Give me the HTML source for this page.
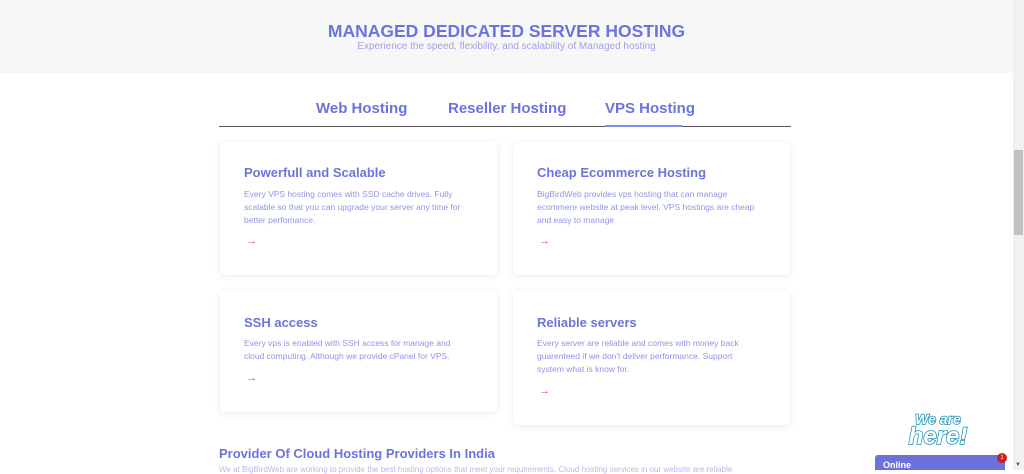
<!DOCTYPE html>
<html><head><style>
*{margin:0;padding:0;box-sizing:border-box}
body{width:1024px;height:470px;overflow:hidden;background:#fff;font-family:"Liberation Sans",sans-serif;position:relative}
.hdr{position:absolute;left:0;top:0;width:1013px;height:73px;background:#f7f7f7;text-align:center}
.hdr h1{position:absolute;top:21px;width:100%;font-size:17.5px;font-weight:bold;color:#6a74dd;letter-spacing:0}
.hdr p{position:absolute;top:41px;width:100%;font-size:10px;color:#9ea3e6}
.tab{position:absolute;top:100px;font-size:15px;font-weight:bold;color:#6a74dd}
.line{position:absolute;left:219px;top:126px;width:572px;height:1px;background:#555}
.act{position:absolute;left:605px;top:125px;width:77px;height:2px;background:#7f8af0}
.card{position:absolute;background:#fff;border-radius:5px;box-shadow:0 1px 8px rgba(0,0,0,0.09)}
.card h3{position:absolute;left:24px;font-size:13px;font-weight:bold;color:#6a74dd}
.card p{position:absolute;left:24px;width:218px;font-size:8.5px;line-height:13px;color:#8f95e4}
.card span{position:absolute;left:26px;font-size:11px;font-weight:bold;color:#f04a4a}
.sb{position:absolute;left:1013px;top:0;width:11px;height:470px;background:#f1f1f1}
.th{position:absolute;left:1014px;top:150px;width:9px;height:85px;background:#c1c1c1}
</style></head><body>
<div class="hdr"><h1>MANAGED DEDICATED SERVER HOSTING</h1><p>Experience the speed, flexibility, and scalability of Managed hosting</p></div>
<div class="tab" style="left:316px">Web Hosting</div>
<div class="tab" style="left:448px">Reseller Hosting</div>
<div class="tab" style="left:605px">VPS Hosting</div>
<div class="line"></div><div class="act"></div>
<div class="card" style="left:220px;top:142px;width:277px;height:133px">
<h3 style="top:23px">Powerfull and Scalable</h3>
<p style="top:46px">Every VPS hosting comes with SSD cache drives. Fully scalable so that you can upgrade your server any time for better perfomance.</p>
<span style="top:93px">→</span></div>
<div class="card" style="left:513px;top:142px;width:277px;height:133px">
<h3 style="top:23px">Cheap Ecommerce Hosting</h3>
<p style="top:46px">BigBirdWeb provides vps hosting that can manage ecommere website at peak level. VPS hostings are cheap and easy to manage</p>
<span style="top:93px">→</span></div>
<div class="card" style="left:220px;top:291px;width:277px;height:121px">
<h3 style="top:24px">SSH access</h3>
<p style="top:46px">Every vps is enabled with SSH access for manage and cloud computing. Although we provide cPanel for VPS.</p>
<span style="top:81px">→</span></div>
<div class="card" style="left:513px;top:291px;width:277px;height:134px">
<h3 style="top:24px">Reliable servers</h3>
<p style="top:46px">Every server are reliable and comes with money back guarenteed if we don't deliver performance. Support system what is know for.</p>
<span style="top:94px">→</span></div>
<div style="position:absolute;left:219px;top:446px;font-size:13px;font-weight:bold;color:#6a74dd">Provider Of Cloud Hosting Providers In India</div>
<div style="position:absolute;left:219px;top:465px;font-size:8px;color:#b5b9ee;white-space:nowrap">We at BigBirdWeb are working to provide the best hosting options that meet your requirements. Cloud hosting services in our website are reliable</div>
<div style="position:absolute;left:900px;top:413px;width:76px;font-family:'Liberation Sans';font-style:italic;font-weight:bold;color:#fff;text-align:center;line-height:0.9;-webkit-text-stroke:1.5px #1a8fb8;paint-order:stroke">
<div style="font-size:14px">We are</div><div style="font-size:24px">here!</div></div>
<div style="position:absolute;left:875px;top:455px;width:130px;height:15px;background:#6b72dc;border-radius:3px 3px 0 0;color:#fff;font-size:9px;font-weight:bold;padding:5px 0 0 8px">Online</div>
<div style="position:absolute;left:997px;top:453px;width:10px;height:10px;border-radius:50%;background:#d01b1b;color:#fff;font-size:6px;text-align:center;line-height:10px">1</div>
<div class="sb"></div><div class="th"></div>
<div style="position:absolute;left:1015px;top:462px;font-size:6px;color:#555">▼</div>
</body></html>
